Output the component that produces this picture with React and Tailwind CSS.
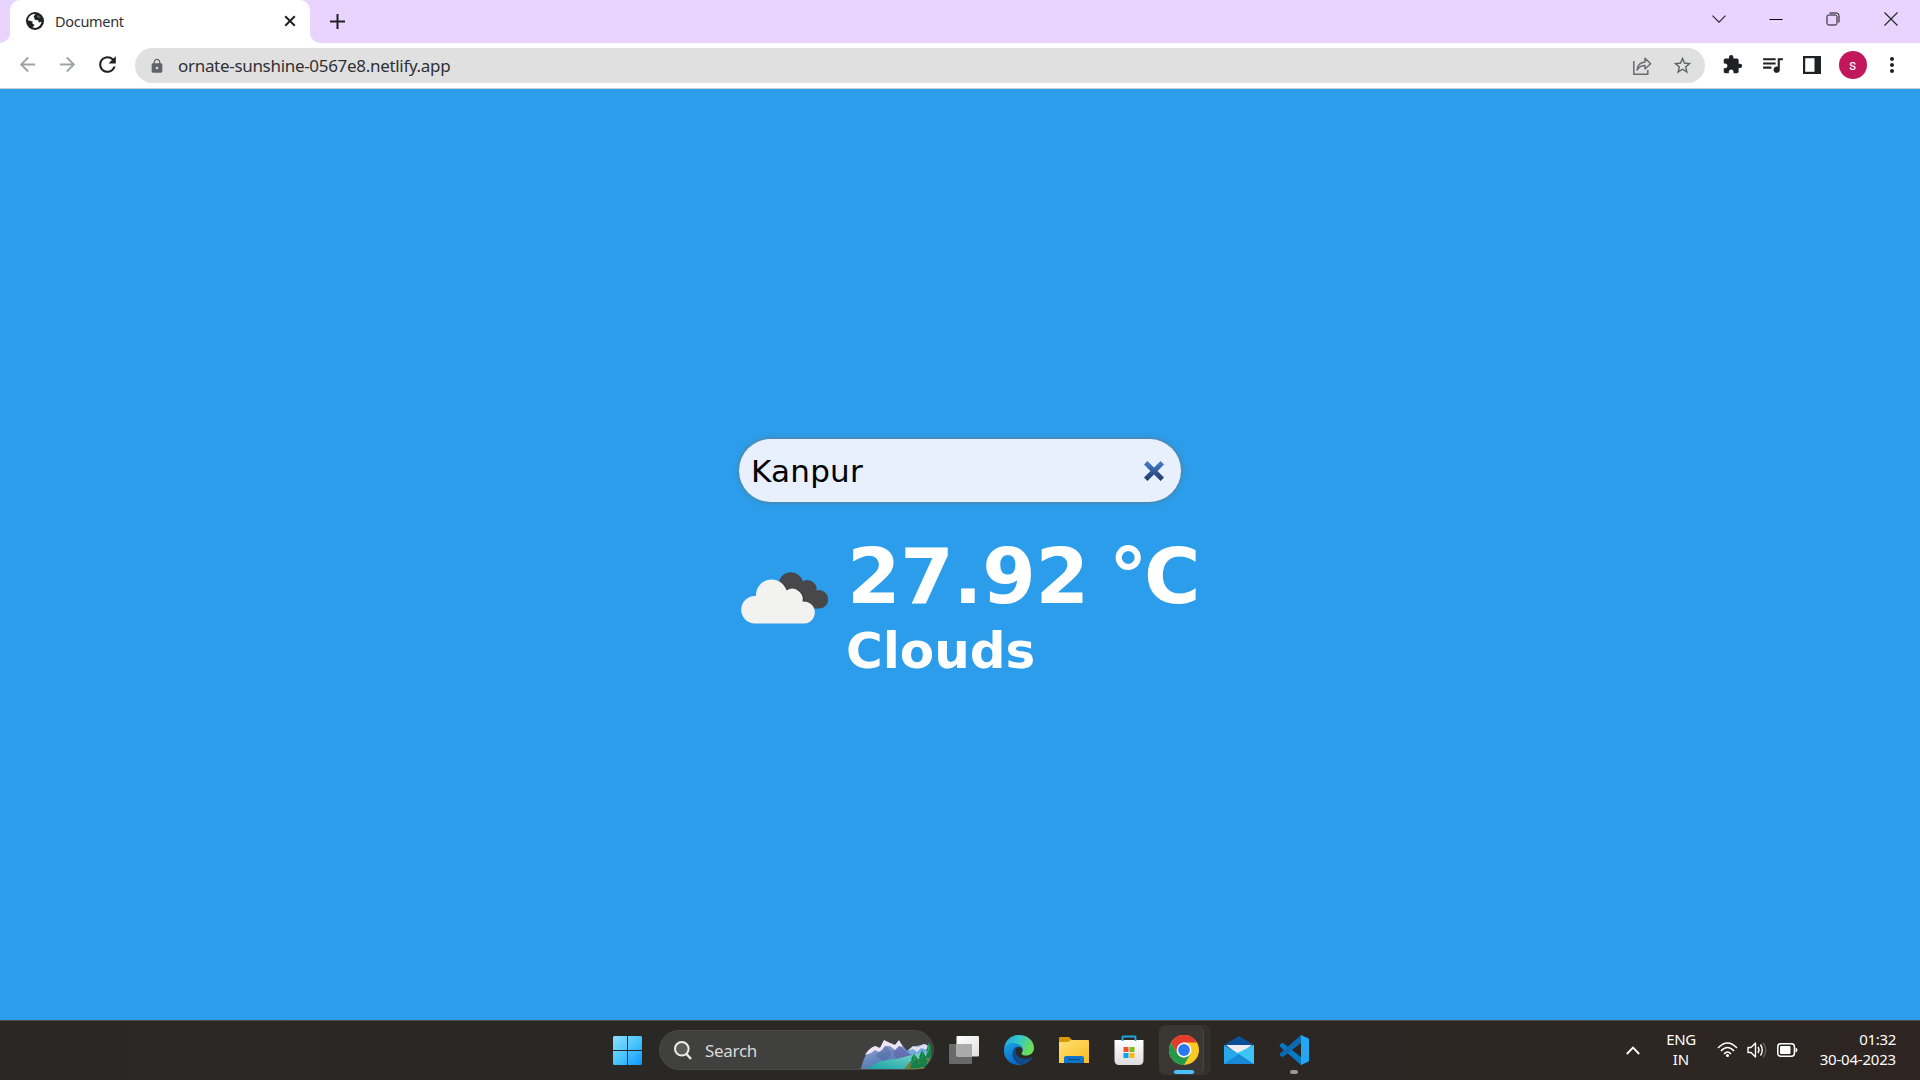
import React from "react";
import { MdArrowBack, MdArrowForward, MdRefresh, MdLock, MdStarBorder, MdExtension, MdQueueMusic, MdMoreVert } from "react-icons/md";

const Globe = () => (
  <svg width="18" height="18" viewBox="0 0 18 18">
    <circle cx="9" cy="9" r="9" fill="#202124" />
    <path d="M2 8.6C2.2 5 5 2.3 8.2 2.1L9.6 2.4C8.2 3.2 7.2 4.2 8 5.4C9 6.4 8.4 7.4 9.4 8L12 8.2C13 9 12.2 10.2 13.2 10.6L15.6 9.8C15 13 12.4 15.6 9.4 15.9L6.2 15.2C7.4 14.6 8.6 13.8 8.2 12.8C7.4 12 6.6 12.2 6.4 11L6.6 9.6L4 8.7Z" fill="#fff" />
    <path d="M11.2 3.4L12.6 3.2L14.8 5.6L13 6.2L10.8 5Z" fill="#fff" opacity="0.25" />
  </svg>
);

const TabStrip = () => (
  <div className="flex h-[43px] w-full justify-between bg-[#e8d4ff]">
    <div className="flex items-end">
      <div className="h-[43px] w-[10px] bg-white">
        <div className="h-full w-full rounded-br-[10px] bg-[#e8d4ff]" />
      </div>
      <div className="flex h-[43px] w-[300px] items-center rounded-t-[10px] bg-white pb-px pl-4">
        <Globe />
        <span className="ml-[11px] flex-1 text-[14.5px] leading-none tracking-[-0.3px] text-[#303134]">Document</span>
        <svg width="12" height="12" viewBox="0 0 12 12" className="mr-[14px]" stroke="#202124" strokeWidth="2">
          <path d="M1.2 1.2L10.8 10.8M10.8 1.2L1.2 10.8" />
        </svg>
      </div>
      <div className="h-[43px] w-[10px] bg-white">
        <div className="h-full w-full rounded-bl-[10px] bg-[#e8d4ff]" />
      </div>
      <div className="flex h-[43px] w-[35px] items-center justify-center pb-px">
        <svg width="15" height="15" viewBox="0 0 15 15" stroke="#202124" strokeWidth="2">
          <path d="M7.5 0V15M0 7.5H15" />
        </svg>
      </div>
    </div>
    <div className="flex h-[37px] items-center gap-[43px] pr-[22px]">
      <svg width="14" height="14" viewBox="0 0 14 14" fill="none" stroke="#222" strokeWidth="1.1"><path d="M.5 3.7L7 10.2L13.5 3.7" /></svg>
      <svg width="14" height="14" viewBox="0 0 14 14" fill="none" stroke="#000"><path d="M.5 7.5H13.5" /></svg>
      <svg width="14" height="14" viewBox="0 0 14 14" fill="none" stroke="#111" className="mr-[1px]"><rect x="1" y="3" width="10" height="10" rx="1.6" /><path d="M3.5 1H10.5Q13 1 13 3.5V10.5" /></svg>
      <svg width="14" height="14" viewBox="0 0 14 14" fill="none" stroke="#222" strokeWidth="1.1"><path d="M.5 .5L13.5 13.5M13.5 .5L.5 13.5" /></svg>
    </div>
  </div>
);

const Cell = ({ children }) => <div className="flex h-full w-[40px] items-center justify-center">{children}</div>;

const Toolbar = () => (
  <div className="flex h-[46px] w-full items-start border-b border-[#c9ccd1] bg-white pl-[7px]">
    <div className="flex h-[43px] w-[128px] items-center">
      <Cell><MdArrowBack size={23} color="#a2a3a5" /></Cell>
      <Cell><MdArrowForward size={23} color="#a2a3a5" /></Cell>
      <Cell><MdRefresh size={25} color="#202124" /></Cell>
    </div>
    <div className="mt-[5px] flex h-[35px] w-[1570px] items-center rounded-full bg-[#e0e0e0] pl-[14px] pr-[3px]">
      <MdLock size={16} color="#5f6368" />
      <span className="ml-[13px] flex-1 text-[17px] leading-none tracking-[-0.31px] text-[#303134]">ornate-sunshine-0567e8.netlify.app</span>
      <div className="flex h-full items-center">
        <Cell>
          <svg width="20" height="20" viewBox="0 0 20 20" fill="none" stroke="#6b6b6d" strokeWidth="1.5">
            <path d="M1.8 5V18.2H15.8V14" />
            <path d="M5 14C5.5 9.2 8.4 6.4 13 6V2.2L18.6 7.8L13 13V9.5C9.5 9.5 7 10.8 5 14Z" strokeLinejoin="round" />
          </svg>
        </Cell>
        <Cell><MdStarBorder size={21} color="#5f6368" /></Cell>
      </div>
    </div>
    <div className="ml-[7px] flex h-[43px] items-center">
      <Cell><MdExtension size={21} color="#202124" /></Cell>
      <Cell><MdQueueMusic size={25} color="#202124" /></Cell>
      <Cell>
        <svg width="18" height="18" viewBox="0 0 18 18"><rect x="1.1" y="1.1" width="15.8" height="15.8" fill="none" stroke="#202124" strokeWidth="2.2" /><path d="M11.5 1H17V17H11.5Z" fill="#202124" /></svg>
      </Cell>
      <Cell><div className="ml-px flex h-7 w-7 shrink-0 items-center justify-center rounded-full bg-[#c2185b] font-['Roboto'] text-[14px] leading-none text-white">s</div></Cell>
      <Cell><MdMoreVert size={24} color="#202124" /></Cell>
    </div>
  </div>
);

const Clouds = () => (
  <svg width="88" height="56" viewBox="0 0 88 56">
    <path d="M39 12A12.5 12.5 0 0 1 63 12.5A9 9 0 0 1 76.5 21.5A9.2 9.2 0 1 1 78 39.5H60Z" fill="#48484a" />
    <path d="M14 54.5A13.5 13.5 0 0 1 16 27A15.6 15.6 0 0 1 46.5 22.5A10.5 10.5 0 0 1 62.5 33A11 11 0 0 1 65 54.5Z" fill="#222" opacity="0.45" transform="translate(1.6 -1.2)" clipPath="url(#dark-cloud)" />
    <clipPath id="dark-cloud"><path d="M39 12A12.5 12.5 0 0 1 63 12.5A9 9 0 0 1 76.5 21.5A9.2 9.2 0 1 1 78 39.5H60Z" /></clipPath>
    <path d="M14 54.5A13.5 13.5 0 0 1 16 27A15.6 15.6 0 0 1 46.5 21.5A10.5 10.5 0 0 1 62.5 32.5A11 11 0 0 1 65 54.5Z" fill="#f2f2f1" />
  </svg>
);

const Weather = () => (
  <main className="flex h-[931px] w-full flex-col bg-[#2b9deb] pl-[739px] pt-[350px] font-['DejaVu_Sans',sans-serif]">
    <div className="flex h-[63px] w-[442px] items-center rounded-full bg-[#e8f0fe] pl-[12px] pr-[17px] shadow-[0_0_5px_0px_rgba(110,110,100,0.85)]">
      <span className="flex-1 pt-[2px] text-[31px] leading-none tracking-[0.25px] text-black">Kanpur</span>
      <svg width="20" height="20" viewBox="0 0 20 20" className="mt-px">
        <defs><linearGradient id="clear" x1="0" y1="0" x2="0" y2="1"><stop stopColor="#4a80d0" /><stop offset="1" stopColor="#203864" /></linearGradient></defs>
        <path d="M3.4 0L10 6.4L16.6 0L20 3.4L13.6 10L20 16.6L16.6 20L10 13.6L3.4 20L0 16.6L6.4 10L0 3.4Z" fill="url(#clear)" />
      </svg>
    </div>
    <div className="flex">
      <div className="mt-[67px] ml-[1px] h-[57px] w-[88px]"><Clouds /></div>
      <div className="mt-[31px] ml-[18px] flex flex-col whitespace-nowrap font-bold text-white">
        <div className="h-[87px] pl-px text-[77px] leading-[87px] tracking-[-0.4px] [word-spacing:-6px]">
          27.92 <span className="tracking-[-3.5px]">°</span>C
        </div>
        <div className="h-[60px] text-[50px] leading-[62px]">Clouds</div>
      </div>
    </div>
  </main>
);

const StartIcon = () => (
  <svg width="29" height="29" viewBox="0 0 29 29">
    <defs><linearGradient id="win" x1="0" y1="0" x2="1" y2="1"><stop stopColor="#8be1ff" /><stop offset=".5" stopColor="#4cc5fc" /><stop offset="1" stopColor="#0a96fa" /></linearGradient></defs>
    <path d="M1 0H14V14H0V1ZM15 0H28L29 1V14H15ZM0 15H14V29H1L0 28ZM15 15H29V28L28 29H15Z" fill="url(#win)" />
  </svg>
);

const Landscape = () => (
  <svg width="72" height="29" viewBox="0 0 72 29">
    <defs>
      <linearGradient id="mt" x1="0" y1="0" x2=".6" y2="1"><stop stopColor="#a9b0dc" /><stop offset=".6" stopColor="#6684bd" /><stop offset="1" stopColor="#3a79a5" /></linearGradient>
      <linearGradient id="lake" x1="0" y1="1" x2="1" y2="0"><stop stopColor="#18a5a7" /><stop offset="1" stopColor="#86d7cb" /></linearGradient>
      <clipPath id="pill"><path d="M0 0H67Q76 15 62 29H0Z" /></clipPath>
    </defs>
    <g clipPath="url(#pill)">
      <path d="M45 12L55 6L64 4L70 7V18H45Z" fill="#76a9dd" />
      <path d="M46 11L52 6L57 7L63 4L69 7L67 10L60 8L56 12L52 9Z" fill="#e4def0" />
      <path d="M0 29Q2 18 7 12L14 6L19 8L23 1L29 3L34 5L38 1L42 6L49 14L61 17V29Z" fill="url(#mt)" />
      <path d="M24 5L31 12L26 23L14 16Z" fill="#405d96" opacity=".35" />
      <path d="M38 5L48 15L37 20L32 13Z" fill="#655aa8" opacity=".5" />
      <path d="M4 15Q8 8 14 6L19 8L23 0L29 3L34 5L38 0L42 7L38 6L34 10L29 6L24 6L21 10L18 12L14 10L10 13Z" fill="#eee6f6" />
      <path d="M8 29Q17 19 35 19L59 13L71 14V29Z" fill="url(#lake)" />
      <path d="M43 29L48 23L59 18L72 16V29Z" fill="#70813e" />
      <g fill="#13814c"><path d="M53 14L57 19H56L58 23H57L59 28H49L51 23H49L51 19H50Z" /><path d="M61 10L65 17H64L67 22H65L68 27H56L59 22H57L59 17H58Z" /><path d="M68 2L73 9V18H64L67 11H65Z" /></g>
      <g fill="#32b45a" opacity=".7"><path d="M53 14L55 19L51 23L53 18ZM61 10L62 16L59 22L61 17ZM68 2L69 10L66 13Z" /></g>
    </g>
  </svg>
);

const TaskView = () => (
  <svg width="30" height="28" viewBox="0 0 30 28">
    <defs><linearGradient id="tv" x2="1" y2="1"><stop stopColor="#fff" /><stop offset="1" stopColor="#dedede" /></linearGradient></defs>
    <rect y="8" width="23" height="20" rx="1" fill="#696969" />
    <rect x="7.5" width="22.5" height="20.5" rx="1" fill="url(#tv)" />
    <path d="M7.5 8H23V20.5H7.5Z" fill="#aaa" />
  </svg>
);

const Edge = () => (
  <svg width="30" height="30" viewBox="0 0 30 30">
    <defs>
      <linearGradient id="e1" x1="0" y1="0" x2="1" y2=".4"><stop stopColor="#1b9de2" /><stop offset=".5" stopColor="#36c6cc" /><stop offset="1" stopColor="#6bdd55" /></linearGradient>
      <linearGradient id="e2" x1="0" y1="0" x2=".4" y2="1"><stop stopColor="#1ba4e4" /><stop offset="1" stopColor="#0868c9" /></linearGradient>
    </defs>
    <path d="M0 14C1 5 7 0 15 0C24 0 30 6 30 13C30 18 26 20.5 22 20.5C18 20.5 16.6 18.8 18.3 16.8C19.5 14 18 10.5 13.5 9.5C7 8 2 9.5 0 14Z" fill="url(#e1)" />
    <path d="M0 14C2 9 6 7.4 11 8.2C16 9 19 12 18.8 15C17 11 12 10.5 9.5 15C6.5 21 11 28 18 29.7C7 31.5 -1 23.5 0 14Z" fill="url(#e2)" />
    <path d="M11.5 12.3C7 16 8 27 18 29.7C22.5 29 26 26.5 28 23.2C28.3 22.4 27.7 22 27 22.4C20 25.5 12.5 22.5 11.8 17Q11.5 14 13.5 12Z" fill="#114a8b" />
  </svg>
);

const Folder = () => (
  <svg width="30" height="27" viewBox="0 0 30 27">
    <defs><linearGradient id="fo" x2="1" y2="1"><stop stopColor="#ffe077" /><stop offset="1" stopColor="#fabd1e" /></linearGradient></defs>
    <path d="M0 1Q0 0 1 0H10L13 3V7H0Z" fill="#d99b05" />
    <path d="M0 5H9L12 3H29Q30 3 30 4V26H0Z" fill="url(#fo)" />
    <path d="M5 26V21Q5 19 7 19H23Q25 19 25 21V26Z" fill="#0c74ca" />
    <path d="M9 22.5H21" stroke="#07538f" strokeWidth="1.2" />
  </svg>
);

const Store = () => (
  <svg width="30" height="30" viewBox="0 0 30 30">
    <defs><linearGradient id="st" x2="0" y2="1"><stop stopColor="#fff" /><stop offset="1" stopColor="#dcdcdc" /></linearGradient></defs>
    <path d="M.5 5H29.5V25Q29.5 30 25 30H5Q.5 30 .5 25Z" fill="url(#st)" />
    <path d="M8.5 6V2Q8.5 1.5 9 1.5H21Q21.5 1.5 21.5 2V6" fill="none" stroke="#20a7df" strokeWidth="1.8" />
    <path d="M9.5 12H14.5V17H9.5Z" fill="#f0502b" /><path d="M15.5 12H20.5V17H15.5Z" fill="#7fba14" />
    <path d="M9.5 18H14.5V23H9.5Z" fill="#06a3ee" /><path d="M15.5 18H20.5V23H15.5Z" fill="#fcb80b" />
  </svg>
);

const Chrome = () => (
  <svg width="30" height="30" viewBox="0 0 30 30">
    <circle cx="15" cy="15" r="15" fill="#fbc924" />
    <path d="M2 7.5A15 15 0 0 1 28 7.5H15L8.5 18.7Z" fill="#e33b2e" />
    <path d="M2 7.5A15 15 0 0 0 15 30L21.5 18.7L15 22.5Q10.5 22.5 8.5 18.7Z" fill="#249a48" />
    <circle cx="15" cy="15" r="7.4" fill="#fff" /><circle cx="15" cy="15" r="5.9" fill="#2878ee" />
  </svg>
);

const Mail = () => (
  <svg width="30" height="28" viewBox="0 0 30 28">
    <path d="M0 9L15 0L30 9V16H0Z" fill="#0b4f96" />
    <path d="M2 9H28L15 19Z" fill="#ededf2" />
    <path d="M0 9L15 18L30 9V28H0Z" fill="#28a8e9" />
    <path d="M30 9V28L13 17Z" fill="#41cbf7" />
    <path d="M0 28L15 18L30 28Z" fill="#1988d8" />
    <path d="M20 15L30 9V28L15 18Z" fill="#3cc5f4" />
  </svg>
);

const VSCode = () => (
  <svg width="30" height="30" viewBox="0 0 30 30">
    <path d="M22 0L30 3.5V26.5L22 30L1 11.5Q0 10.5 1 9.6L2.6 8.2Q3.4 7.6 4.3 8.2L22 22V8Z" fill="#087ac5" />
    <path d="M22 8V0L1 18.5Q0 19.5 1 20.4L2.6 21.8Q3.4 22.4 4.3 21.8Z" fill="#0a6bb4" />
    <path d="M22 0L29 3.4Q30 4 30 5V25Q30 26 29 26.6L22 30Z" fill="#25a6f1" />
  </svg>
);

const Task = ({ children }) => <div className="flex h-full w-[55px] items-center justify-center">{children}</div>;

const Taskbar = () => (
  <footer className="flex h-[60px] w-full justify-between border-t border-[#4b4946] bg-linear-to-r from-[#2b2725] via-[#292824] via-40% to-[#2e2522] pb-px font-['Noto_Sans',sans-serif] text-white">
    <div className="flex h-full items-center pl-[613px]">
      <StartIcon />
      <div className="ml-[17px] flex h-[40px] w-[275px] items-center rounded-full border border-[#4a4947] bg-[#40403e] pl-[14px]">
        <svg width="18" height="19" viewBox="0 0 18 19" fill="#5b5b5a" stroke="#ececec" strokeWidth="2"><circle cx="7.8" cy="7.8" r="6.8" /><path d="M12.5 13L17 18" strokeWidth="2.4" /></svg>
        <span className="ml-[13px] flex-1 text-[17px] leading-none tracking-[-0.3px] text-[#d9d9d9]">Search</span>
        <div className="pt-[8px]"><Landscape /></div>
      </div>
      <div className="ml-[2px] flex h-full items-center">
        <Task><TaskView /></Task>
        <Task><Edge /></Task>
        <Task><Folder /></Task>
        <Task><Store /></Task>
        <div className="mr-px ml-[3px] flex h-[50px] w-[51px] rounded-md border border-[#3b3634] bg-[#322e2b]">
          <div className="flex h-full w-[44px] flex-col items-center rounded-md border-r border-[#4a4542] bg-[#3b3735] pl-[5px] pt-[9px]">
            <Chrome />
            <div className="mt-[5px] h-1 w-5 rounded-full bg-[#4cc2ff]" />
          </div>
        </div>
        <Task><Mail /></Task>
        <div className="flex h-full w-[55px] flex-col items-center pt-[14px]">
          <VSCode />
          <div className="mt-[5px] h-1 w-2 rounded-full bg-[#9b9997]" />
        </div>
      </div>
    </div>
    <div className="flex h-full items-center pr-[24px] text-[15px]">
      <svg width="14" height="9" viewBox="0 0 14 9" fill="none" stroke="#fff" strokeWidth="1.8"><path d="M.8 8L7 1.6L13.2 8" /></svg>
      <div className="ml-[20px] flex w-[42px] flex-col pb-[2px] text-center leading-[20px]"><span className="tracking-[-0.4px]">ENG</span><span>IN</span></div>
      <svg className="ml-[15px]" width="21" height="16" viewBox="0 0 21 16" fill="none" stroke="#fff" strokeWidth="1.5">
        <path d="M1 6Q10.5 -4 20 6M4 9Q10.5 2 17 9M7 12Q10.5 8 14 12" /><circle cx="10.5" cy="13.5" r="1.5" fill="#fff" stroke="none" />
      </svg>
      <svg className="ml-[9px]" width="21" height="18" viewBox="0 0 21 18" fill="none" stroke="#fff" strokeWidth="1.4">
        <path d="M1 6.5H4L8.5 2V16L4 11.5H1Z" strokeLinejoin="round" /><path d="M11 6Q13 9 11 12M13.5 3.5Q17 9 13.5 14.5" /><path d="M16 1.5Q21.5 9 16 16.5" stroke="#625d5a" />
      </svg>
      <svg className="ml-[9px]" width="21" height="14" viewBox="0 0 21 14"><rect x=".8" y=".8" width="16.6" height="12.4" rx="3" fill="none" stroke="#fff" strokeWidth="1.5" /><rect x="3" y="3" width="10.5" height="8" rx="1" fill="#fff" /><path d="M18.5 4.5Q20.5 5 20.5 7T18.5 9.5Z" fill="#fff" /></svg>
      <div className="ml-[20px] flex w-[78px] flex-col items-end whitespace-nowrap pb-[3px] leading-[20px]"><span className="tracking-[-0.3px]">01:32</span><span className="tracking-[-0.2px]">30-04-2023</span></div>
    </div>
  </footer>
);

export default function App() {
  return (
    <div className="flex h-[1080px] w-[1920px] flex-col overflow-hidden font-['Noto_Sans',sans-serif]">
      <TabStrip />
      <Toolbar />
      <Weather />
      <Taskbar />
    </div>
  );
}
